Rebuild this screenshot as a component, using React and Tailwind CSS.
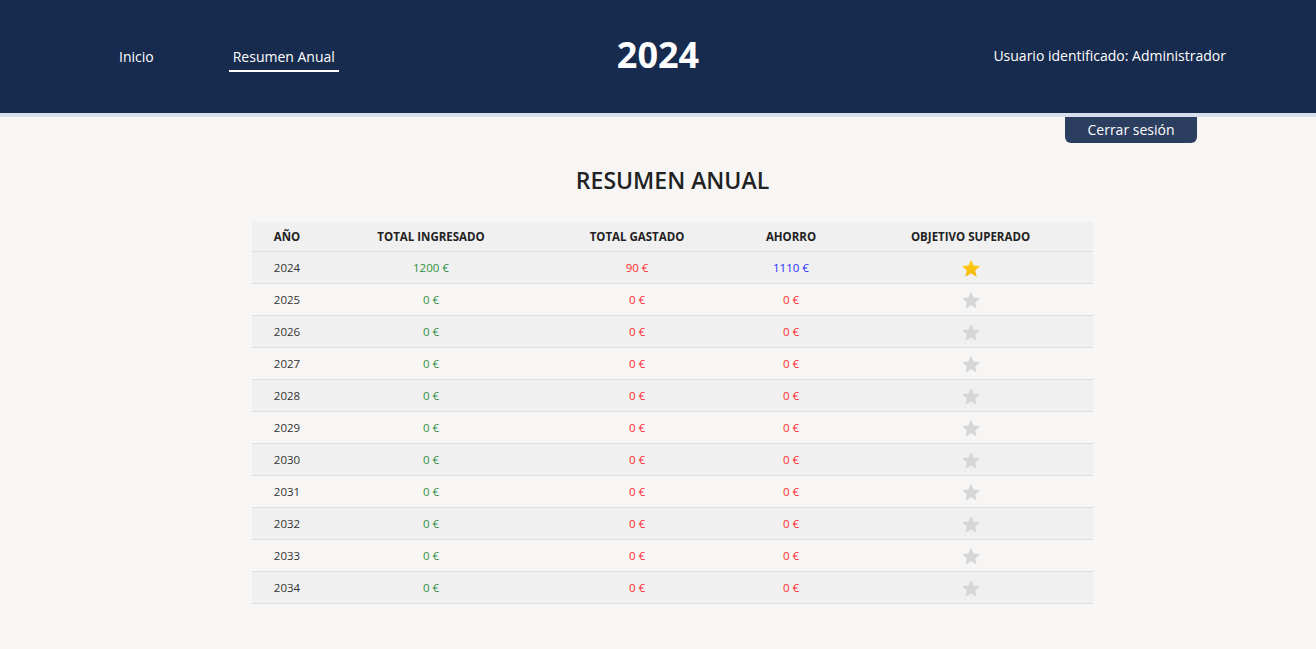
import React from 'react'

// ── Datos del resumen ───────────────────────────────────────────────────────
const ROWS = [
  { year: 2024, ingresado: 1200, gastado: 90, ahorro: 1110, ok: true },
  ...Array.from({ length: 10 }, (_, i) => ({
    year: 2025 + i, ingresado: 0, gastado: 0, ahorro: 0, ok: false,
  })),
]

function Star({ filled }) {
  return (
    <svg width="20" height="19" viewBox="0 0 24 23" className="inline-block">
      <defs>
        <linearGradient id="gold" x1="0" y1="0" x2="0" y2="1">
          <stop offset="0" stopColor="#ffd21f" />
          <stop offset="1" stopColor="#f5b400" />
        </linearGradient>
      </defs>
      <polygon
        points="12,0.8 15.2,8 23,8.6 17,13.8 18.9,21.6 12,17.4 5.1,21.6 7,13.8 1,8.6 8.8,8"
        fill={filled ? 'url(#gold)' : '#d6d6d6'}
      />
    </svg>
  )
}

function Header() {
  return (
    <header className="grid grid-cols-3 items-center h-[113px] bg-[#172b4f] text-white">
      <nav className="flex items-center pl-[116px] gap-[72px] text-[14px] leading-[19px] pt-[5px]">
        <a className="px-[3px] pb-[4px] border-b-2 border-transparent">Inicio</a>
        <a className="px-[4px] pb-[4px] border-b-2 border-white">Resumen Anual</a>
      </nav>
      <h1 className="text-center text-[36px] font-bold leading-none pb-[4px]">2024</h1>
      <div className="text-right pr-[90px] text-[14px] pb-[3px]">Usuario identificado: Administrador</div>
    </header>
  )
}

export default function App() {
  return (
    <div className="min-h-[649px] bg-[#f7f6f5] text-[#333]" style={{ fontFamily: '"Open Sans", "Noto Sans", sans-serif' }}>
      <Header />
      <div className="h-[4px] bg-[#d7deec]" />
      <div className="flex justify-end pr-[119px]">
        <button className="w-[132px] h-[26px] rounded-b-md bg-[#2b3e5f] text-white text-[14px] leading-none">
          Cerrar sesión
        </button>
      </div>

      <div className="pl-[29px]">
        <h2 className="mt-[20px] text-center text-[23px] font-semibold text-[#222]">RESUMEN ANUAL</h2>

        <div className="flex justify-center mt-[24px]">
          <table className="table-fixed w-[841px] border-collapse text-[11.5px]">
            <colgroup>
              <col className="w-[70px]" />
              <col className="w-[218px]" />
              <col className="w-[194px]" />
              <col className="w-[114px]" />
              <col className="w-[245px]" />
            </colgroup>
            <thead>
              <tr className="h-[30px] bg-[#f0f0f0] border-b border-[#dedede] text-[#222] font-bold">
                <th>AÑO</th>
                <th>TOTAL INGRESADO</th>
                <th>TOTAL GASTADO</th>
                <th>AHORRO</th>
                <th>OBJETIVO SUPERADO</th>
              </tr>
            </thead>
            <tbody>
              {ROWS.map((r, i) => (
                <tr key={r.year} className={i % 2 === 0 ? 'h-[32px] bg-[#f0f0f0] border-b border-[#dedede]' : 'h-[32px] bg-[#f7f6f5] border-b border-[#dedede]'}>
                  <td className="text-center text-[#333]">{r.year}</td>
                  <td className="text-center text-[#2f8f3f]">{r.ingresado} €</td>
                  <td className="text-center text-[#ff2b2b]">{r.gastado} €</td>
                  <td className={r.ahorro > 0 ? 'text-center text-[#2b2bff]' : 'text-center text-[#ff2b2b]'}>{r.ahorro} €</td>
                  <td className="text-center pt-[1px]"><Star filled={r.ok} /></td>
                </tr>
              ))}
            </tbody>
          </table>
        </div>
      </div>
    </div>
  )
}
